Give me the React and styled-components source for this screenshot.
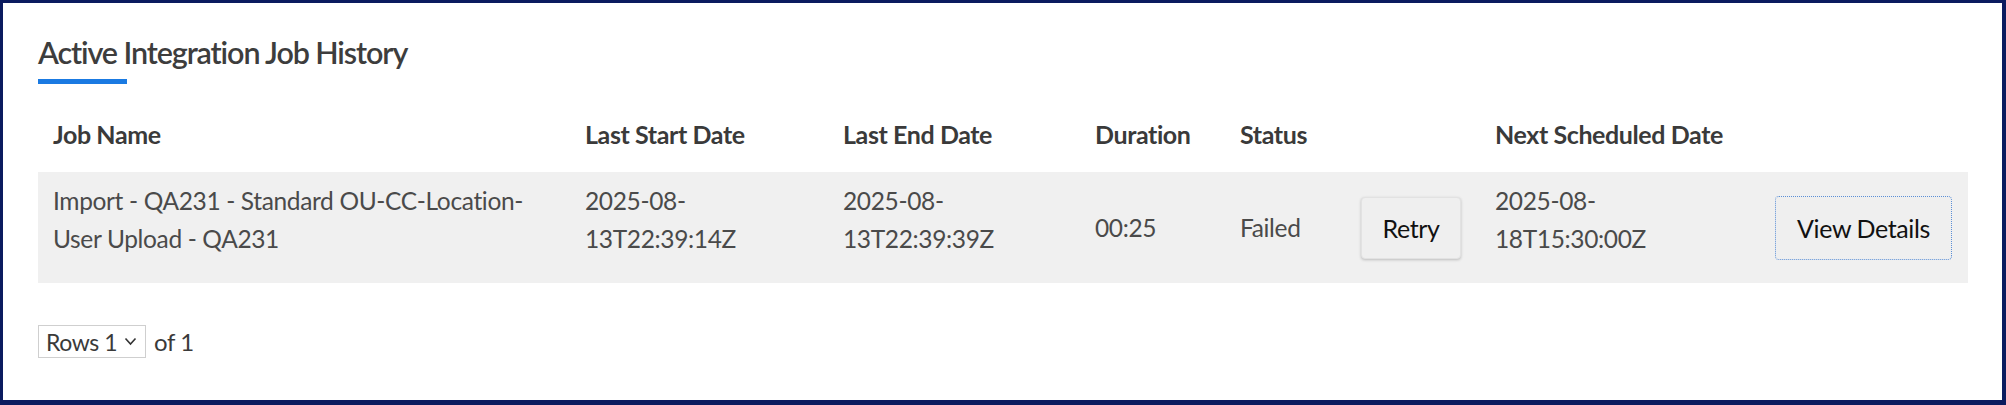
import React from "react"
import styled, { createGlobalStyle } from "styled-components"

const GlobalStyle = createGlobalStyle`
    html, body {
        margin: 0;
        padding: 0;
        background: #ffffff;
    }
    * {
        box-sizing: border-box;
    }
`

const Frame = styled.div`
    width: 2006px;
    height: 405px;
    background: #ffffff;
    border-style: solid;
    border-color: #0b1b5f;
    border-width: 3px 4px 5px 3px;
    padding: 31px 34px 0 35px;
    font-family: Lato, "Noto Sans", sans-serif;
    color: #4a4a4a;
`

const Title = styled.h2`
    margin: 0;
    font-size: 30.5px;
    line-height: 37px;
    font-weight: 600;
    letter-spacing: -1.1px;
    color: #3d3d3d;
`

const TitleBar = styled.div`
    width: 89px;
    height: 5px;
    margin-top: 8px;
    background: #1a7ae2;
`

const GridRow = styled.div`
    display: grid;
    grid-template-columns: 532px 258px 252px 145px 121px 134px 280px 177px;
    align-items: center;
    padding: ${(p) => (p.$header ? "12px 16px 0 15px" : "0 16px 0 15px")};
    height: ${(p) => (p.$header ? "88px" : "111px")};
    background: ${(p) => (p.$header ? "transparent" : "#f0f0f0")};
`

const HeadCell = styled.div`
    font-size: 25px;
    font-weight: 700;
    letter-spacing: -0.4px;
    color: #3a3a3a;
    white-space: nowrap;
`

const Cell = styled.div`
    font-size: 24.5px;
    line-height: 38px;
    letter-spacing: -0.35px;
    color: #4a4a4a;
    max-width: ${(p) => p.$max || "none"};
    margin-bottom: ${(p) => (p.$multi ? "15px" : "0")};
`

const Button = styled.button`
    font-family: Lato, "Noto Sans", sans-serif;
    font-size: 25px;
    letter-spacing: -0.4px;
    color: #111111;
    background: #efefef;
    border-radius: 4px;
    cursor: pointer;
    padding: 0;
    width: ${(p) => p.$w};
    height: ${(p) => p.$h};
    border: ${(p) => (p.$focused ? "1.5px dotted #5b8fd6" : "1px solid #e2e2e2")};
    box-shadow: ${(p) => (p.$focused ? "none" : "0 1px 3px rgba(0, 0, 0, 0.22)")};
`

const Pager = styled.div`
    display: flex;
    align-items: center;
    gap: 8px;
    margin-top: 42px;
    font-size: 24px;
    letter-spacing: -0.4px;
    color: #3a3a3a;
`

const RowsSelect = styled.div`
    display: flex;
    align-items: center;
    gap: 7px;
    width: 108px;
    height: 33px;
    padding: 0 0 0 7px;
    border: 1px solid #cfcfcf;
    background: #ffffff;
    font-size: 23px;
    color: #3a3a3a;
`

const Chevron = () => (
    <svg width="13" height="9" viewBox="0 0 13 9">
        <path d="M1.5 1.5 L6.5 7 L11.5 1.5" fill="none" stroke="#333" strokeWidth="1.6" />
    </svg>
)

const headers = ["Job Name", "Last Start Date", "Last End Date", "Duration", "Status", "", "Next Scheduled Date", ""]

const App = () => {
    return (
        <>
            <GlobalStyle />
            <Frame>
                <Title>Active Integration Job History</Title>
                <TitleBar />
                <GridRow $header>
                    {headers.map((h, i) => (
                        <HeadCell key={i}>{h}</HeadCell>
                    ))}
                </GridRow>
                <GridRow>
                    <Cell $multi $max="492px">Import - QA231 - Standard OU-CC-Location-User Upload - QA231</Cell>
                    <Cell $multi $max="200px">2025-08-13T22:39:14Z</Cell>
                    <Cell $multi $max="200px">2025-08-13T22:39:39Z</Cell>
                    <Cell>00:25</Cell>
                    <Cell>Failed</Cell>
                    <div>
                        <Button $w="100px" $h="62px">Retry</Button>
                    </div>
                    <Cell $multi $max="200px">2025-08-18T15:30:00Z</Cell>
                    <div>
                        <Button $focused $w="177px" $h="64px">View Details</Button>
                    </div>
                </GridRow>
                <Pager>
                    <RowsSelect>
                        Rows 1 <Chevron />
                    </RowsSelect>
                    of 1
                </Pager>
            </Frame>
        </>
    )
}

export default App
